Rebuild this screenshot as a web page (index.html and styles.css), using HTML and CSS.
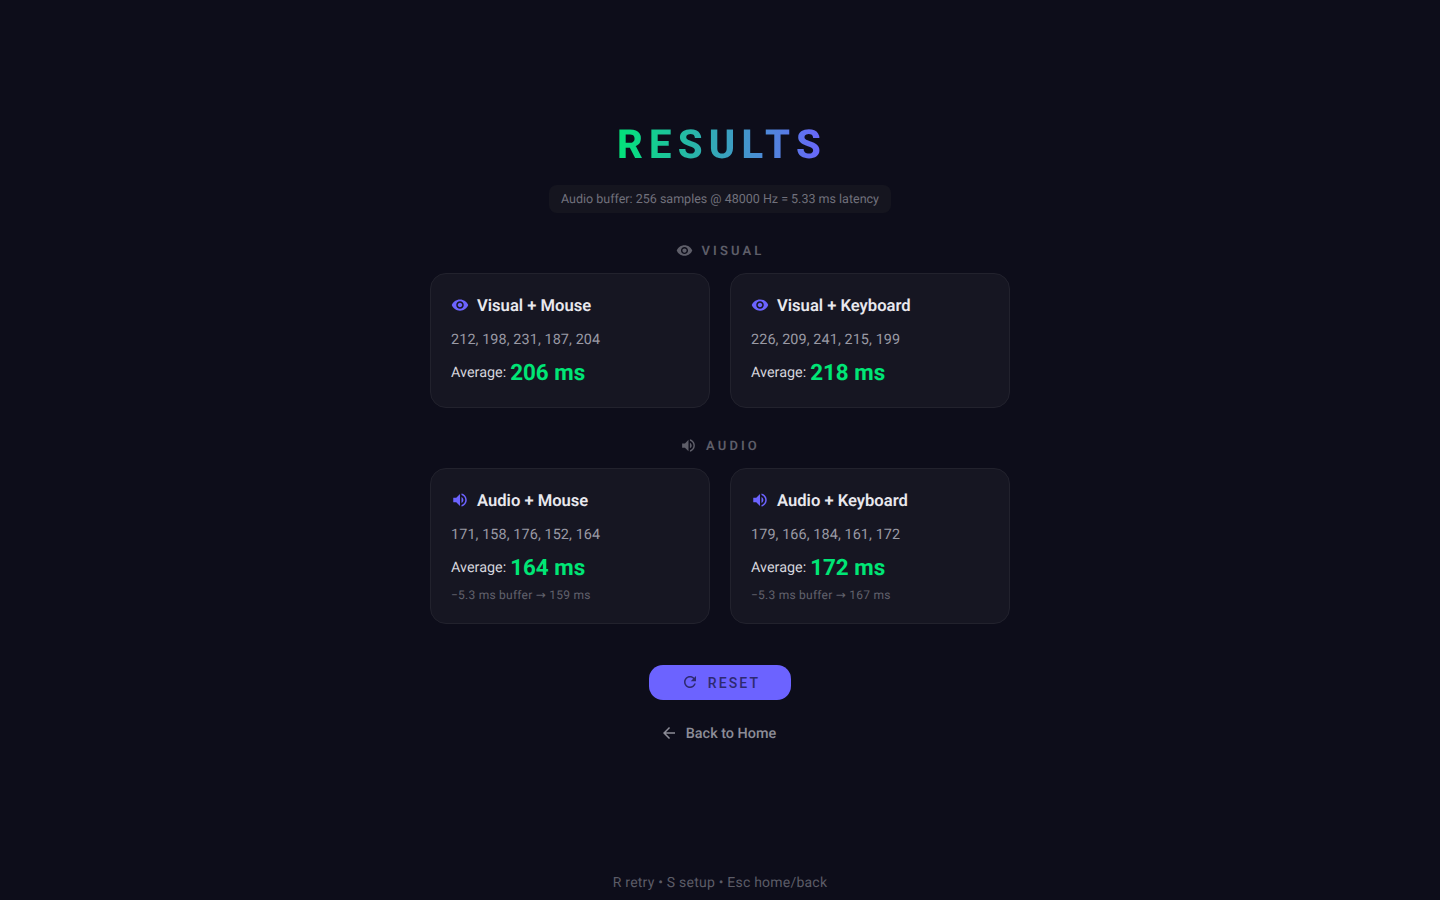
FILE: index.html
```html
<!DOCTYPE html>
<html lang="en">

<head>
    <meta charset="UTF-8">
    <meta name="viewport" content="width=device-width, initial-scale=1.0">
    <title>Results</title>
    <link rel="stylesheet" href="styles.css">
</head>

<body>
    <svg class="icon-defs" width="0" height="0" aria-hidden="true">
        <symbol id="i-eye" viewBox="0 0 24 24"><path d="M12 4.5C7 4.5 2.73 7.61 1 12c1.73 4.39 6 7.5 11 7.5s9.27-3.11 11-7.5c-1.73-4.39-6-7.5-11-7.5zM12 17c-2.76 0-5-2.24-5-5s2.24-5 5-5 5 2.24 5 5-2.24 5-5 5zm0-8c-1.66 0-3 1.34-3 3s1.34 3 3 3 3-1.34 3-3-1.34-3-3-3z"/></symbol>
        <symbol id="i-volume" viewBox="0 0 24 24"><path d="M3 9v6h4l5 5V4L7 9H3zm13.5 3c0-1.77-1.02-3.29-2.5-4.03v8.05c1.48-.73 2.5-2.25 2.5-4.02zM14 3.23v2.06c2.89.86 5 3.54 5 6.71s-2.11 5.85-5 6.71v2.06c4.01-.91 7-4.49 7-8.77s-2.99-7.86-7-8.77z"/></symbol>
        <symbol id="i-refresh" viewBox="0 0 24 24"><path d="M17.65 6.35C16.2 4.9 14.21 4 12 4c-4.42 0-7.99 3.58-7.99 8s3.57 8 7.99 8c3.73 0 6.84-2.55 7.73-6h-2.08c-.82 2.33-3.04 4-5.65 4-3.31 0-6-2.69-6-6s2.69-6 6-6c1.66 0 3.14.69 4.22 1.78L13 11h7V4l-2.35 2.35z"/></symbol>
        <symbol id="i-back" viewBox="0 0 24 24"><path d="M20 11H7.83l5.59-5.59L12 4l-8 8 8 8 1.41-1.41L7.83 13H20v-2z"/></symbol>
    </svg>

    <div class="main-container">
        <h1 class="title">RESULTS</h1>
        <div class="buffer-info">Audio buffer: 256 samples @ 48000 Hz = 5.33 ms latency</div>

        <div class="section-label">
            <svg class="label-icon"><use href="#i-eye"/></svg>
            <span>VISUAL</span>
        </div>
        <div class="card-grid">
            <div class="card">
                <div class="card-title">
                    <svg class="card-icon"><use href="#i-eye"/></svg>
                    <span>Visual + Mouse</span>
                </div>
                <div class="trials">212, 198, 231, 187, 204</div>
                <div class="average"><span>Average:</span> <strong>206 ms</strong></div>
            </div>
            <div class="card">
                <div class="card-title">
                    <svg class="card-icon"><use href="#i-eye"/></svg>
                    <span>Visual + Keyboard</span>
                </div>
                <div class="trials">226, 209, 241, 215, 199</div>
                <div class="average"><span>Average:</span> <strong>218 ms</strong></div>
            </div>
        </div>

        <div class="section-label">
            <svg class="label-icon"><use href="#i-volume"/></svg>
            <span>AUDIO</span>
        </div>
        <div class="card-grid">
            <div class="card">
                <div class="card-title">
                    <svg class="card-icon"><use href="#i-volume"/></svg>
                    <span>Audio + Mouse</span>
                </div>
                <div class="trials">171, 158, 176, 152, 164</div>
                <div class="average"><span>Average:</span> <strong>164 ms</strong></div>
                <div class="adjusted">−5.3 ms buffer <span class="arrow">→</span> 159 ms</div>
            </div>
            <div class="card">
                <div class="card-title">
                    <svg class="card-icon"><use href="#i-volume"/></svg>
                    <span>Audio + Keyboard</span>
                </div>
                <div class="trials">179, 166, 184, 161, 172</div>
                <div class="average"><span>Average:</span> <strong>172 ms</strong></div>
                <div class="adjusted">−5.3 ms buffer <span class="arrow">→</span> 167 ms</div>
            </div>
        </div>

        <button class="reset-button">
            <svg class="reset-icon"><use href="#i-refresh"/></svg>
            <span>RESET</span>
        </button>
        <a class="back-link" href="#">
            <svg class="back-icon"><use href="#i-back"/></svg>
            <span>Back to Home</span>
        </a>
    </div>

    <div class="footer">R retry • S setup • Esc home/back</div>
</body>
</html>
```

FILE: styles.css
```css
* {
    box-sizing: border-box;
}

body {
    display: flex;
    flex-direction: column;
    align-items: center;
    height: 900px;
    margin: 0;
    padding: 0;
    overflow: hidden;
    background-color: #0D0D1A;
    color: #E8E8EE;
    font-family: Roboto, "Liberation Sans", sans-serif;
    text-rendering: geometricPrecision;
}

.icon-defs {
    position: absolute;
}

.main-container {
    display: flex;
    flex-direction: column;
    align-items: center;
    width: 580px;
    padding-top: 120px;
}

.title {
    margin: 0;
    padding-top: 1px;
    padding-left: 4px;
    font-size: 40px;
    line-height: 47px;
    font-weight: 800;
    letter-spacing: 6.2px;
    background: linear-gradient(90deg, #00E676, #6C63FF);
    -webkit-background-clip: text;
    background-clip: text;
    color: transparent;
}

.buffer-info {
    margin-top: 17px;
    padding: 7px 12px 5px;
    border-radius: 8px;
    background-color: #15151F;
    color: #71717C;
    font-size: 12.5px;
    line-height: 16px;
}

.section-label {
    display: flex;
    align-items: center;
    gap: 9px;
    margin-top: 30px;
    color: #5E5E69;
    font-size: 13px;
    line-height: 18px;
    font-weight: 600;
    letter-spacing: 3.12px;
}

.label-icon {
    width: 17px;
    height: 17px;
    margin-top: -2px;
    margin-bottom: 2px;
    fill: currentColor;
}

.card-grid {
    display: grid;
    grid-template-columns: 280px 280px;
    gap: 20px;
    width: 100%;
    margin-top: 12px;
}

.card {
    padding: 20px 20px 19px;
    border: 1px solid #22222D;
    border-radius: 16px;
    background-color: #161622;
}

.card-title {
    display: flex;
    align-items: center;
    gap: 8px;
    color: #E8E8EE;
    font-size: 16.6px;
    line-height: 22px;
    font-weight: 600;
}

.card-title span {
    padding-top: 2px;
}

.card-icon {
    width: 18px;
    height: 18px;
    margin-top: -1px;
    margin-bottom: 1px;
    fill: #6C63FF;
}

.trials {
    margin-top: 12px;
    color: #9A9AA5;
    font-size: 14.4px;
    line-height: 20px;
    letter-spacing: 0.1px;
}

.average {
    display: flex;
    align-items: center;
    gap: 4px;
    margin-top: 8px;
    color: #D4D4DC;
    font-size: 14.4px;
    line-height: 30px;
}

.average strong {
    color: #00E676;
    font-size: 22.4px;
    font-weight: 700;
}

.adjusted {
    margin-top: 4px;
    padding-bottom: 1px;
    color: #62626D;
    font-size: 12px;
    line-height: 16px;
    letter-spacing: 0.24px;
}

.arrow {
    font-family: "DejaVu Sans", sans-serif;
    font-size: 12px;
}

.reset-button {
    display: flex;
    align-items: center;
    justify-content: center;
    gap: 9px;
    width: 142px;
    height: 35.5px;
    margin-top: 40.5px;
    padding: 0 0 0 1px;
    border: none;
    border-radius: 14px;
    background-color: #6C63FF;
    color: #2E2A70;
    font-family: inherit;
    font-size: 14px;
    font-weight: 500;
    letter-spacing: 2.1px;
    cursor: pointer;
}

.reset-button span {
    padding-top: 2px;
}

.reset-icon {
    width: 18px;
    height: 18px;
    fill: currentColor;
}

.back-link {
    display: flex;
    align-items: center;
    gap: 8px;
    margin-top: 23px;
    margin-right: 4px;
    color: #8C8C97;
    font-size: 14.4px;
    line-height: 22px;
    font-weight: 500;
    text-decoration: none;
}

.back-icon {
    width: 18px;
    height: 18px;
    margin-bottom: 2px;
    fill: currentColor;
}

.footer {
    margin-top: auto;
    padding-bottom: 8px;
    color: #5C5C67;
    font-size: 14px;
    line-height: 18px;
    letter-spacing: 0.22px;
}
```
